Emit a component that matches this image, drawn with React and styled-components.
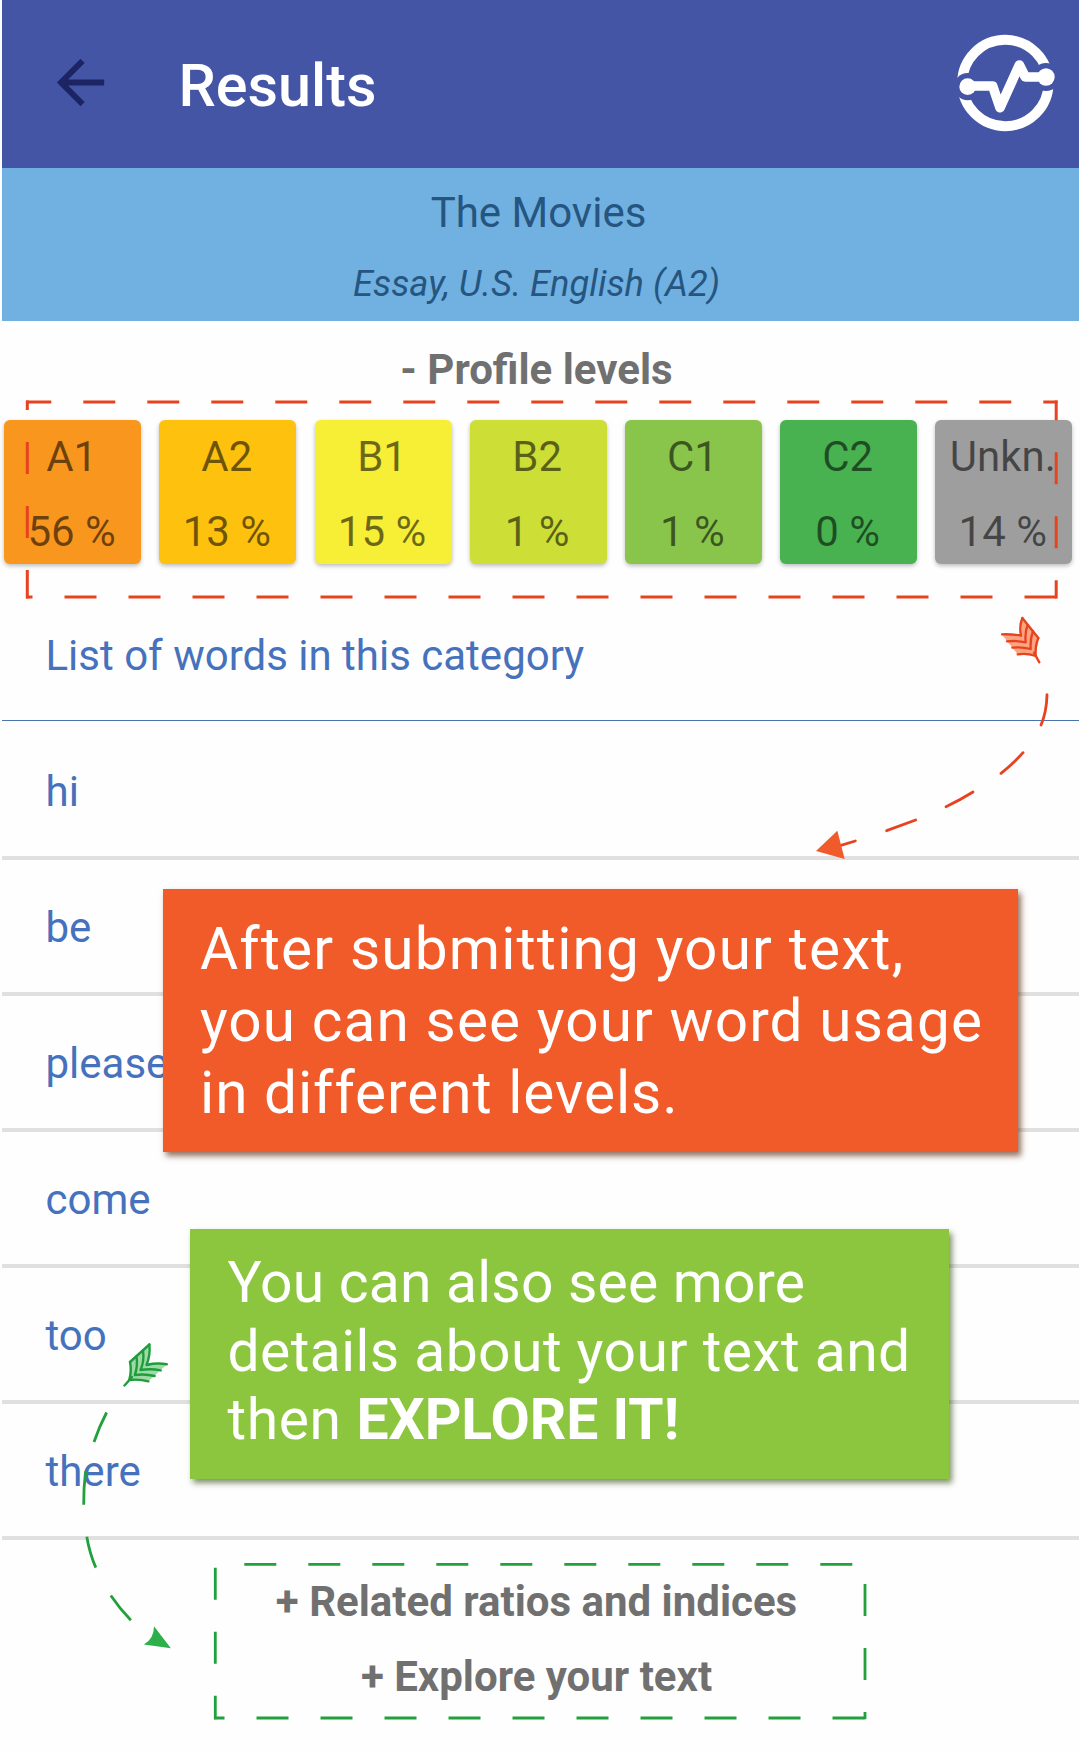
import React from "react";
import styled, { createGlobalStyle } from "styled-components";

const Global = createGlobalStyle`
  *, *::before, *::after { box-sizing: border-box; }
  body { margin: 0; background: #fefefe; font-family: Roboto, "Noto Sans", sans-serif; }
`;

const Screen = styled.main`
  position: relative;
  display: flex;
  flex-direction: column;
  width: 1080px;
  height: 1753px;
  padding: 0 1px 0 2px;
  overflow: hidden;
  background: #fefefe;
`;

const TopBar = styled.header`
  display: flex;
  flex: none;
  align-items: center;
  height: 168px;
  padding: 0 0 0 43px;
  background: #4455a5;
`;

const BackIcon = styled.svg`
  width: 71px;
  height: 71px;
  margin-top: -4px;
  fill: #1c2463;
`;

const ScreenTitle = styled.h1`
  flex: 1;
  margin: 4px 0 0 62.5px;
  font-size: 59.3px;
  font-weight: 500;
  line-height: 70px;
  color: #fff;
`;

const Logo = styled.svg`
  width: 140px;
  height: 130px;
  margin: 2px -1px 0 0;
`;

const TextInfo = styled.section`
  flex: none;
  height: 153px;
  padding-top: 10px;
  background: #70b1e1;
  color: #265580;
  text-align: center;
  line-height: 70px;
`;

const InfoTitle = styled.div`
  padding-right: 4px;
  font-size: 42px;
`;

const InfoDetail = styled.div`
  padding: 1px 8px 0 0;
  font-size: 36.3px;
  font-style: italic;
`;

const SectionToggle = styled.div`
  flex: none;
  padding-right: 8px;
  font-size: 42px;
  font-weight: 700;
  line-height: ${(p) => p.$height}px;
  color: #707070;
  text-align: center;
`;

const Levels = styled.div`
  display: grid;
  flex: none;
  grid-template-columns: repeat(7, 137px);
  column-gap: 18.2px;
  margin: 2px 0 0 2.2px;
`;

const LevelCard = styled.div`
  display: flex;
  flex-direction: column;
  align-items: center;
  gap: 25px;
  height: 144px;
  padding: 11.5px 2px 0 0;
  border-radius: 6px;
  background: ${(p) => p.$color};
  box-shadow: 0 2px 4px rgba(0, 0, 0, 0.26);
  color: rgba(0, 0, 0, 0.56);
  font-size: 42px;
  line-height: 50px;
  white-space: nowrap;
`;

const ListTitle = styled.h2`
  flex: none;
  margin: 28px 0 3px;
  padding-left: 43.5px;
  border-bottom: 1px solid #4b73ad;
  font-size: 42px;
  font-weight: 400;
  line-height: 128px;
  color: #4672bd;
`;

const Words = styled.ul`
  flex: none;
  margin: 0 0 24px;
  padding: 0;
  list-style: none;
`;

const Word = styled.li`
  display: flex;
  align-items: center;
  height: 136px;
  padding: 3px 0 0 43.5px;
  border-bottom: 4px solid #e0e0e0;
  font-size: 42px;
  color: #4672bd;
`;

const Callout = styled.aside`
  position: absolute;
  left: ${(p) => p.$left}px;
  top: ${(p) => p.$top}px;
  width: ${(p) => p.$width}px;
  height: ${(p) => p.$height}px;
  background: ${(p) => p.$color};
  box-shadow: 3px 4px 6px ${(p) => p.$shadow};
  color: #fff;
  white-space: nowrap;
`;

const OrangeCallout = styled(Callout)`
  padding: 24px 0 0 37px;
  font-size: 58.5px;
  line-height: 72px;
`;

const GreenCallout = styled(Callout)`
  padding: 20px 0 0 37.5px;
  font-size: 57px;
  line-height: 68.5px;
`;

const Line = styled.div`
  letter-spacing: ${(p) => p.$tracking}px;
`;

const Emphasis = styled.b`
  letter-spacing: 0;
`;

const Overlay = styled.svg`
  position: absolute;
  inset: 0;
  width: 1080px;
  height: 1753px;
  pointer-events: none;
`;

const LEVELS = [
  ["A1", "56 %", "#f9961e"],
  ["A2", "13 %", "#fdc10e"],
  ["B1", "15 %", "#f7ee36"],
  ["B2", "1 %", "#cdde37"],
  ["C1", "1 %", "#8ac54b"],
  ["C2", "0 %", "#48b150"],
  ["Unkn.", "14 %", "#9e9e9e"],
];

const WORDS = ["hi", "be", "please", "come", "too", "there"];

function Brand() {
  return (
    <Logo viewBox="0 0 420 390" fill="none" stroke="#fff">
      <mask id="ring-gaps" maskUnits="userSpaceOnUse" x="0" y="0" width="420" height="390">
        <rect width="420" height="390" fill="#fff" stroke="none" />
        <circle cx="83" cy="200" r="41" fill="#000" stroke="none" />
        <circle cx="318" cy="171" r="42" fill="#000" stroke="none" />
      </mask>
      <circle cx="196" cy="189" r="129.5" strokeWidth="30" mask="url(#ring-gaps)" />
      <path d="M83 198H158L180 263L238 135L256 171H318" strokeWidth="29" strokeLinejoin="round" />
      <circle cx="83" cy="200" r="25" fill="#fff" stroke="none" />
      <circle cx="318" cy="171" r="26" fill="#fff" stroke="none" />
    </Logo>
  );
}

function Dashes({ d, offset }) {
  return <path d={d} strokeDasharray="32 32" strokeDashoffset={offset} />;
}

function Annotations() {
  return (
    <Overlay viewBox="0 0 1080 1753" fill="none">
      <g stroke="#e8431f" strokeWidth="3">
        <Dashes d="M26 402H1057.6" offset={6.7} />
        <Dashes d="M26 597H1057.6" offset={25.5} />
        <Dashes d="M27.3 400.6V598.4" offset={22.6} />
        <Dashes d="M1056.2 400.6V598.4" offset={12.3} />
      </g>
      <g stroke="#22a03c" strokeWidth="2.8">
        <path d="M244.3 1564.4H865" strokeDasharray="32 32" />
        <Dashes d="M214 1718H866.3" offset={21.5} />
        <path d="M215.3 1567.8V1719.3" strokeDasharray="32 32" />
        <path d="M865 1584V1719.3" strokeDasharray="32 32" />
      </g>
      <g transform="translate(780 600) scale(0.33333)">
        <path d="M665 103L722 107L727 53L775 115L767 168L713 163Z" fill="#fca582" />
        <g stroke="#e8431f" strokeWidth="7" strokeLinecap="round" strokeLinejoin="round">
          <path d="M666 103Q696 102 723 107Q717 78 727 54" />
          <path d="M681 124Q711 121 737 127Q734 96 743 75" />
          <path d="M697 143Q727 140 752 147Q750 118 759 93" />
          <path d="M713 163Q742 159 767 168Q765 138 775 114" />
          <path d="M727 54L775 114M762 158L778 187" />
        </g>
        <g stroke="#e8431f" strokeWidth="8.5" strokeLinecap="round">
          <path d="M801 284Q800 335 783 375" />
          <path d="M729 458Q700 491 663 520" />
          <path d="M579 576Q544 598 498 620" />
          <path d="M407 660L320 692" />
          <path d="M226 723L180 737" />
        </g>
        <path d="M108 753L172 692L194 777Z" fill="#f15a2b" />
      </g>
      <path d="M149.4 1344L147.5 1364L167 1364.3L148.4 1381.3L129.3 1380L129.8 1361.7Z" fill="#9ddaa6" />
      <g stroke="#1f9d3c" strokeWidth="2.4" strokeLinecap="round" strokeLinejoin="round">
        <path d="M149.4 1344.5Q150.5 1355 146.5 1365Q157 1362.5 166.8 1364.3" />
        <path d="M143 1350.5Q144.5 1361 140.5 1370Q151 1368.3 160.7 1370.4" />
        <path d="M136.5 1356.5Q138 1366 134.8 1375Q145 1373.5 154.6 1376" />
        <path d="M130 1362Q132 1371 129.2 1380Q139 1378.8 148.4 1381.3" />
        <path d="M149.4 1344.5L130 1362M132 1377L124.5 1385.5" />
      </g>
      <g stroke="#22a03c" strokeWidth="2.8">
        <path d="M106.6 1412.5Q99 1427 94 1442" />
        <path d="M85.6 1471.5Q83.5 1488 83.7 1504.7" />
        <path d="M86.8 1536.7Q89.5 1553 95.8 1567.6" />
        <path d="M110.8 1595.5Q119.5 1608.5 130.9 1620.2" />
      </g>
      <path d="M154 1626.2L170.9 1648.2L143.8 1644.4Q154 1639 154 1626.2Z" fill="#2db04a" />
    </Overlay>
  );
}

export default function App() {
  return (
    <>
      <Global />
      <Screen>
        <TopBar>
          <BackIcon viewBox="0 0 24 24">
            <path d="M20 11H7.83l5.59-5.59L12 4l-8 8 8 8 1.41-1.41L7.83 13H20v-2z" />
          </BackIcon>
          <ScreenTitle>Results</ScreenTitle>
          <Brand />
        </TopBar>
        <TextInfo>
          <InfoTitle>The Movies</InfoTitle>
          <InfoDetail>Essay, U.S. English (A2)</InfoDetail>
        </TextInfo>
        <SectionToggle $height={97}>- Profile levels</SectionToggle>
        <Levels>
          {LEVELS.map(([name, share, color]) => (
            <LevelCard key={name} $color={color}>
              <span>{name}</span>
              <span>{share}</span>
            </LevelCard>
          ))}
        </Levels>
        <ListTitle>List of words in this category</ListTitle>
        <Words>
          {WORDS.map((word) => (
            <Word key={word}>{word}</Word>
          ))}
        </Words>
        <SectionToggle $height={75}>+ Related ratios and indices</SectionToggle>
        <SectionToggle $height={75}>+ Explore your text</SectionToggle>

        <OrangeCallout $left={163} $top={889} $width={855} $height={262.5} $color="#f15a29" $shadow="rgba(90, 40, 10, 0.65)">
          <Line $tracking={1.16}>After submitting your text,</Line>
          <Line $tracking={1.12}>you can see your word usage</Line>
          <Line $tracking={0.97}>in different levels.</Line>
        </OrangeCallout>
        <GreenCallout $left={190} $top={1229} $width={759} $height={250} $color="#8cc63f" $shadow="rgba(40, 70, 10, 0.6)">
          <Line $tracking={0.2}>You can also see more</Line>
          <Line $tracking={0.43}>details about your text and</Line>
          <Line $tracking={0.6}>
            then <Emphasis>EXPLORE IT!</Emphasis>
          </Line>
        </GreenCallout>
        <Annotations />
      </Screen>
    </>
  );
}
